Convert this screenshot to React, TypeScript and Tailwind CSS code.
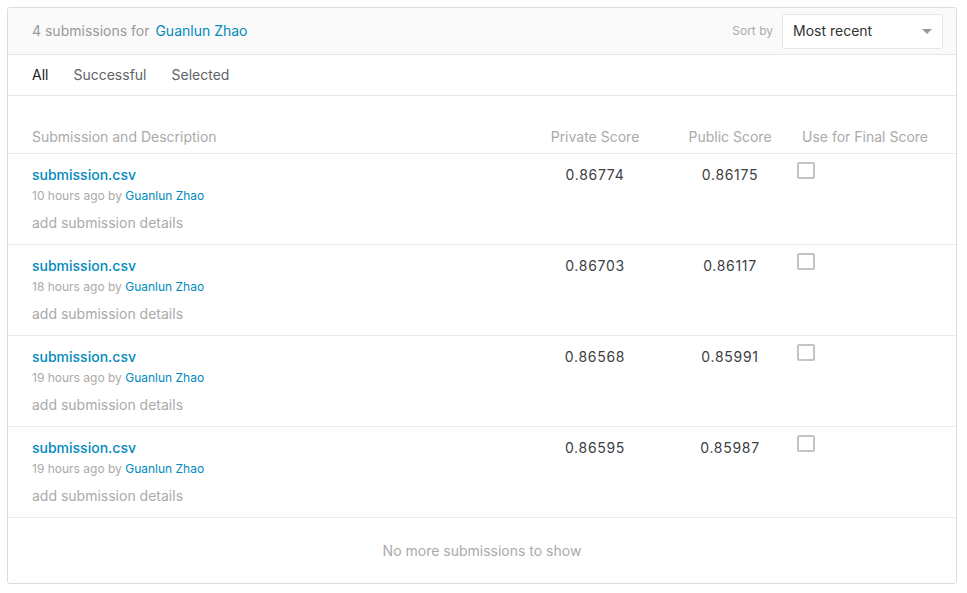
import React from "react";

const rows = [
  { time: "10 hours ago", priv: "0.86774", pub: "0.86175" },
  { time: "18 hours ago", priv: "0.86703", pub: "0.86117" },
  { time: "19 hours ago", priv: "0.86568", pub: "0.85991" },
  { time: "19 hours ago", priv: "0.86595", pub: "0.85987" },
];

const App = () => {
  return (
    <div className="bg-white min-h-screen pt-[7px] px-[7px] font-['Inter',sans-serif]">
      <div className="w-[950px] border border-[#dcdcdc] rounded-[3px]">
        {/* header */}
        <div className="h-[47px] bg-[#fafafa] border-b border-[#e6e6e6] flex items-center justify-between pl-6 pr-[13px]">
          <div className="text-sm text-[#999]">
            4 submissions for <span className="text-[#008abc] ml-[2px]">Guanlun Zhao</span>
          </div>
          <div className="flex items-center">
            <span className="text-xs text-[#aaa] mr-[9px]">Sort by</span>
            <div className="w-[161px] h-[35px] bg-white border border-[#e6e6e6] rounded-[3px] flex items-center justify-between pl-[10px] pr-[10px]">
              <span className="text-sm text-[#333]">Most recent</span>
              <svg width="10" height="5" viewBox="0 0 10 5">
                <path d="M0 0h10L5 5z" fill="#999" />
              </svg>
            </div>
          </div>
        </div>

        {/* tabs */}
        <div className="h-[41px] border-b border-[#e6e6e6] flex items-center pl-6 text-sm">
          <span className="text-[#202124]">All</span>
          <span className="text-[#5f6368] ml-[25px]">Successful</span>
          <span className="text-[#5f6368] ml-[25px]">Selected</span>
        </div>

        {/* column header */}
        <div className="h-[58px] pt-[32px] border-b border-[#ebebeb] flex text-sm text-[#aaa] leading-[17px]">
          <div className="flex-1 pl-6">Submission and Description</div>
          <div className="w-[130px] text-center">Private Score</div>
          <div className="w-[140px] text-center">Public Score</div>
          <div className="w-[156px] pl-[2px]">Use for Final Score</div>
        </div>

        {rows.map((r, i) => (
          <div key={i} className="h-[91px] border-b border-[#ebebeb] flex">
            <div className="flex-1 pl-6 pt-[12px]">
              <div className="text-sm font-medium text-[#008abc] leading-[18px]">submission.csv</div>
              <div className="text-xs text-[#aaa] mt-[4px] leading-[15px]">
                {r.time} by <span className="text-[#008abc]">Guanlun Zhao</span>
              </div>
              <div className="text-sm text-[#aaa] mt-[11px] leading-[18px]">add submission details</div>
            </div>
            <div className="w-[130px] text-center pt-[12px] text-sm text-[#3c4043] leading-[18px] tracking-[0.7px]">{r.priv}</div>
            <div className="w-[140px] text-center pt-[12px] text-sm text-[#3c4043] leading-[18px] tracking-[0.7px]">{r.pub}</div>
            <div className="w-[156px] pt-[8px]">
              <div className="w-[18px] h-[17px] border-2 border-[#c4c4c4] rounded-[2px] ml-[-3px]" />
            </div>
          </div>
        ))}

        <div className="h-[65px] flex items-center justify-center text-sm text-[#aaa]">
          No more submissions to show
        </div>
      </div>
    </div>
  );
};

export default App;
